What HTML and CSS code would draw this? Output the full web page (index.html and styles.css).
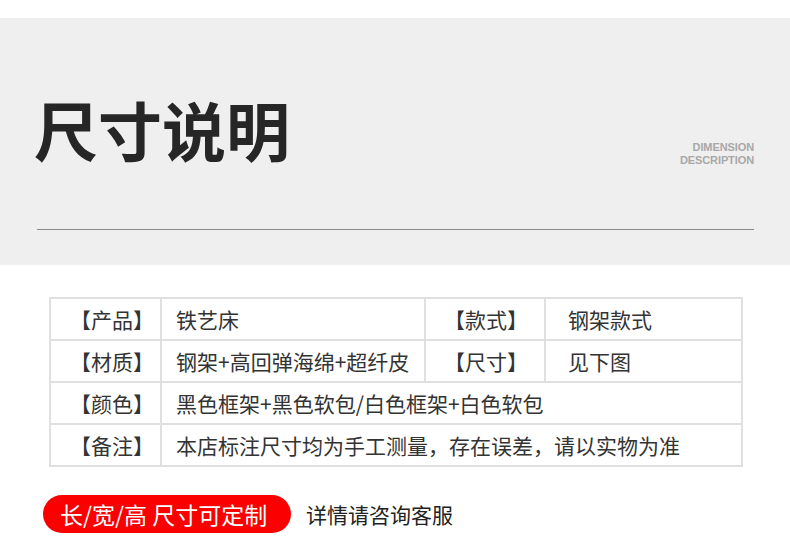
FILE: index.html
```html
<!DOCTYPE html>
<html lang="zh">
<head>
<meta charset="utf-8">
<link rel="stylesheet" href="styles.css">
</head>
<body>
<div class="page">
  <header class="hero">
    <div class="hero-row">
      <h1 class="title">尺寸说明</h1>
      <div class="en"><div class="en-line">DIMENSION</div><div class="en-line">DESCRIPTION</div></div>
    </div>
    <div class="rule"></div>
  </header>

  <table class="spec">
    <colgroup>
      <col class="c1"><col class="c2"><col class="c3"><col class="c4">
    </colgroup>
    <tr>
      <th class="lab">【产品】</th><td>铁艺床</td>
      <th class="lab mid">【款式】</th><td class="v4">钢架款式</td>
    </tr>
    <tr>
      <th class="lab">【材质】</th><td>钢架+高回弹海绵+超纤皮</td>
      <th class="lab mid">【尺寸】</th><td class="v4">见下图</td>
    </tr>
    <tr>
      <th class="lab">【颜色】</th><td colspan="3">黑色框架+黑色软包/白色框架+白色软包</td>
    </tr>
    <tr>
      <th class="lab">【备注】</th><td colspan="3">本店标注尺寸均为手工测量，存在误差，请以实物为准</td>
    </tr>
  </table>

  <div class="custom">
    <span class="pill">长/宽/高 尺寸可定制</span>
    <span class="note">详情请咨询客服</span>
  </div>
</div>
</body>
</html>
```

FILE: styles.css
```css
html, body {
  margin: 0;
  padding: 0;
  background: #ffffff;
}

body {
  font-family: "Noto Sans CJK SC", "Noto Sans", sans-serif;
  color: #333333;
}

.page {
  width: 790px;
  height: 556px;
  overflow: hidden;
  padding-top: 18px;
  box-sizing: border-box;
}

.hero {
  background: #efefef;
  height: 247px;
  box-sizing: border-box;
  padding: 78px 36px 0 37px;
}

.hero-row {
  display: flex;
  justify-content: space-between;
  align-items: flex-start;
}

.title {
  margin: 0 0 0 -3px;
  font-size: 64px;
  line-height: 64px;
  font-weight: 700;
  color: #262626;
  letter-spacing: 0;
}

.en {
  margin-top: 45px;
  font-family: "Liberation Sans", Arial, sans-serif;
  font-weight: 700;
  font-size: 11px;
  color: #a8a8a8;
  text-align: right;
  letter-spacing: -0.1px;
}

.en-line {
  height: 13px;
  line-height: 13px;
}

.rule {
  margin-top: 62px;
  height: 1px;
  background: #8a8a8a;
}

.spec {
  margin: 32px 0 0 49px;
  border-collapse: collapse;
  table-layout: fixed;
  width: 692px;
  font-size: 21px;
  color: #333333;
}

.c1 { width: 111px; }
.c2 { width: 264px; }
.c3 { width: 120px; }
.c4 { width: 197px; }

.spec th,
.spec td {
  border: 2px solid #e0e0e0;
  height: 40px;
  padding: 0;
  font-weight: 400;
  white-space: nowrap;
  line-height: 24px;
}

.spec td {
  padding-left: 14px;
  text-align: left;
}

.spec .lab {
  text-align: right;
  padding-right: 6px;
}

.spec .lab.mid {
  text-align: center;
  padding-right: 0;
  padding-left: 2px;
}

.spec .v4 {
  padding-left: 22px;
}

.custom {
  margin: 28px 0 0 43px;
  display: flex;
  align-items: center;
  gap: 15px;
}

.pill {
  display: inline-flex;
  align-items: center;
  height: 38px;
  width: 248px;
  box-sizing: border-box;
  padding-left: 17px;
  border-radius: 19px;
  background: #fb0000;
  color: #ffffff;
  font-size: 23px;
  white-space: nowrap;
}

.note {
  font-size: 21px;
  color: #222222;
}
```
